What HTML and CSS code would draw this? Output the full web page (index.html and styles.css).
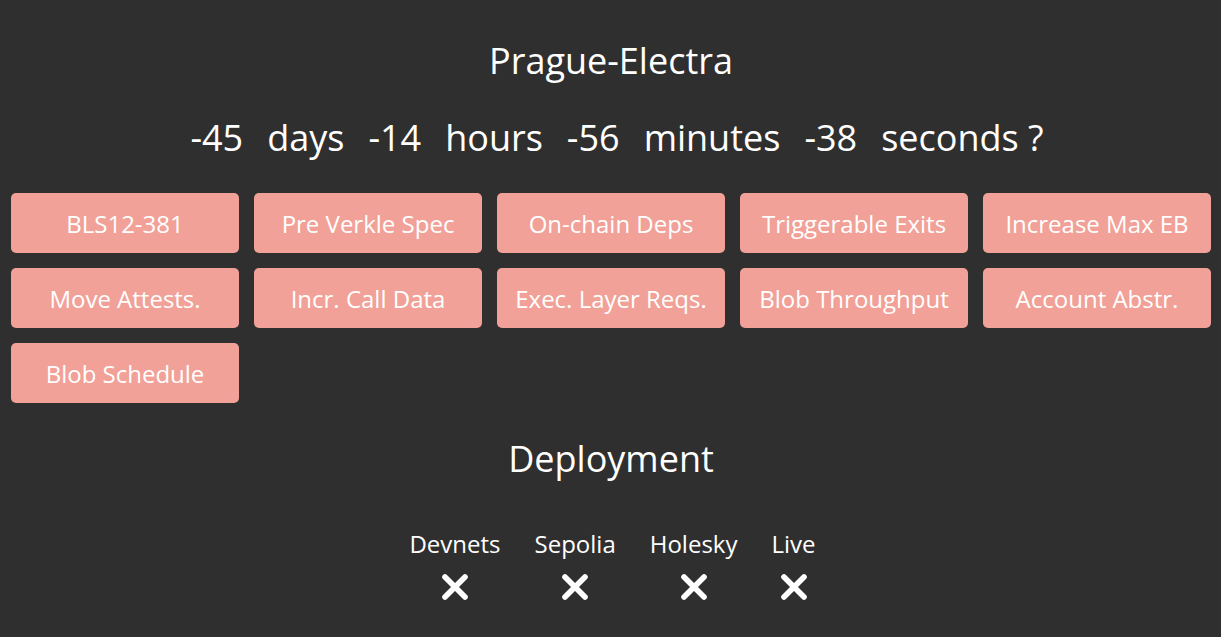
FILE: index.html
```html
<!DOCTYPE html>
<html lang="en">
<head>
  <meta charset="UTF-8">
  <meta name="viewport" content="width=device-width, initial-scale=1.0">
  <title>Prague-Electra</title>
  <link rel="stylesheet" href="styles.css">
</head>
<body>
  <div class="page">
    <h1 class="title">Prague-Electra</h1>

    <div class="countdown">
      <span class="part">-45</span>
      <span class="part">days</span>
      <span class="part">-14</span>
      <span class="part">hours</span>
      <span class="part">-56</span>
      <span class="part">minutes</span>
      <span class="part">-38</span>
      <span class="part">seconds ?</span>
    </div>

    <div class="features">
      <div class="feature">BLS12-381</div>
      <div class="feature">Pre Verkle Spec</div>
      <div class="feature">On-chain Deps</div>
      <div class="feature">Triggerable Exits</div>
      <div class="feature">Increase Max EB</div>
      <div class="feature">Move Attests.</div>
      <div class="feature">Incr. Call Data</div>
      <div class="feature">Exec. Layer Reqs.</div>
      <div class="feature">Blob Throughput</div>
      <div class="feature">Account Abstr.</div>
      <div class="feature">Blob Schedule</div>
    </div>

    <h2 class="subtitle">Deployment</h2>

    <div class="deploy">
      <div class="net">
        <span class="net-name">Devnets</span>
        <svg class="cross" viewBox="0 0 24 24"><path d="M4 4 L20 20 M20 4 L4 20"/></svg>
      </div>
      <div class="net">
        <span class="net-name">Sepolia</span>
        <svg class="cross" viewBox="0 0 24 24"><path d="M4 4 L20 20 M20 4 L4 20"/></svg>
      </div>
      <div class="net">
        <span class="net-name">Holesky</span>
        <svg class="cross" viewBox="0 0 24 24"><path d="M4 4 L20 20 M20 4 L4 20"/></svg>
      </div>
      <div class="net">
        <span class="net-name">Live</span>
        <svg class="cross" viewBox="0 0 24 24"><path d="M4 4 L20 20 M20 4 L4 20"/></svg>
      </div>
    </div>
  </div>
</body>
</html>
```

FILE: styles.css
```css
body {
  margin: 0;
  background-color: #2f2f2f;
  color: #ffffff;
  font-family: "Open Sans", "Noto Sans", sans-serif;
}

.page {
  padding: 38px 10px 0 11px;
  text-align: center;
}

.title {
  margin: 0;
  font-size: 36px;
  font-weight: 400;
  line-height: 45px;
}

.countdown {
  margin-top: 32px;
  padding-left: 12px;
  font-size: 36px;
  line-height: 45px;
  display: flex;
  justify-content: center;
}

.part {
  margin: 0 12px;
}

.features {
  margin-top: 33px;
  display: grid;
  grid-template-columns: repeat(5, 228px);
  column-gap: 15px;
  row-gap: 15px;
}

.feature {
  height: 60px;
  background-color: #f1a197;
  border-radius: 5px;
  display: flex;
  align-items: center;
  justify-content: center;
  font-size: 24px;
}

.subtitle {
  margin: 32px 0 0;
  font-size: 36px;
  font-weight: 400;
  line-height: 48px;
}

.deploy {
  margin-top: 46px;
  padding-left: 3px;
  display: flex;
  justify-content: center;
  gap: 34px;
}

.net {
  display: flex;
  flex-direction: column;
  align-items: center;
}

.net-name {
  font-size: 24px;
  line-height: 30px;
}

.cross {
  margin-top: 13px;
  width: 30px;
  height: 30px;
  fill: none;
  stroke: #ffffff;
  stroke-width: 4.5;
  stroke-linecap: round;
}
```
